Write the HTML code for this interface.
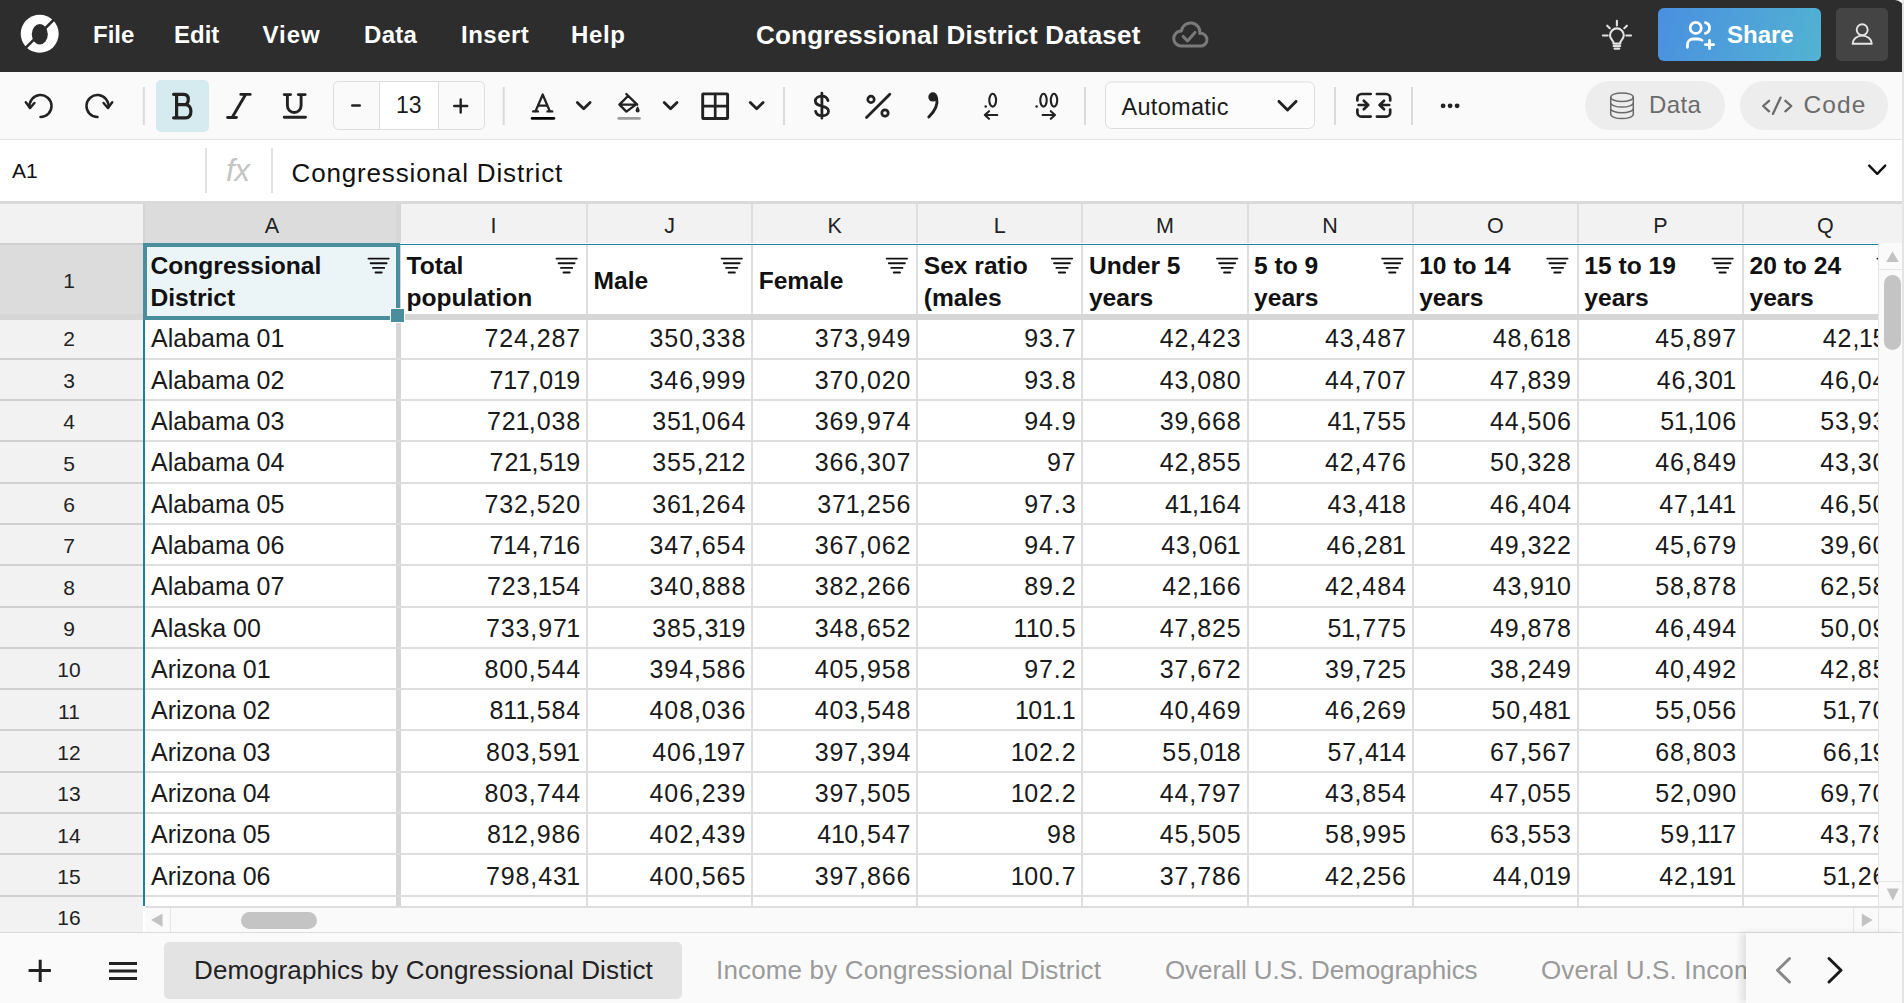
<!DOCTYPE html>
<html><head><meta charset="utf-8"><style>
*{box-sizing:border-box;margin:0;padding:0}
html,body{width:1904px;height:1003px;overflow:hidden;background:#fff}
body{position:relative;font-family:"Liberation Sans", sans-serif;color:#1a1a1a}
.a{position:absolute}
#top{left:0;top:0;width:1904px;height:72px;background:#2d2d2d;border-top-right-radius:9px}
.menu{color:#fff;font-weight:bold;font-size:24px;top:21px;line-height:28px}
#tb{left:0;top:72px;width:1902px;height:68px;background:#fafafa;border-bottom:1px solid #e2e2e2}
#fb{left:0;top:140px;width:1902px;height:61px;background:#fff}
.sep{width:2px;background:#dadada}
.ic{position:absolute}
.num{position:absolute;text-align:right;font-size:25px;letter-spacing:0.9px;line-height:28px;white-space:nowrap;color:#1a1a1a}
.txt{position:absolute;font-size:25px;line-height:28px;white-space:nowrap;color:#1a1a1a}
.tab{position:absolute;top:955px;font-size:26px;letter-spacing:0.14px;line-height:30px;white-space:nowrap}
.o{letter-spacing:-0.5px;margin-left:-1.2px}
.ot{margin-left:-1.5px}
.o2{letter-spacing:-2px}
.hd{position:absolute;font-size:24.6px;font-weight:bold;line-height:32px;white-space:nowrap;color:#111}
.rn{position:absolute;left:0;width:138px;text-align:center;font-size:21px;line-height:24px;color:#222}
.cl{position:absolute;text-align:center;font-size:21.5px;line-height:24px;color:#222}
</style></head>
<body>
<div class="a" id="top"></div>
<div class="a menu" style="left:93px;letter-spacing:0px">File</div>
<div class="a menu" style="left:174px;letter-spacing:0px">Edit</div>
<div class="a menu" style="left:262.5px;letter-spacing:1.0px">View</div>
<div class="a menu" style="left:364px;letter-spacing:0.3px">Data</div>
<div class="a menu" style="left:461px;letter-spacing:0.5px">Insert</div>
<div class="a menu" style="left:571px;letter-spacing:0.6px">Help</div>
<div class="a menu" style="left:756px;font-size:26px;letter-spacing:0.2px;top:20.5px">Congressional District Dataset</div>
<div class="a" id="tb"></div>
<div class="a" style="left:1658px;top:8px;width:163px;height:53px;border-radius:6px;background:linear-gradient(110deg,#4a8fe0 0%,#52b3d2 100%)"></div>
<div class="a" style="left:1836px;top:8px;width:52px;height:53px;border-radius:5px;background:#444"></div>
<div class="a menu" style="left:1727px;top:21px">Share</div>
<div class="a" style="left:0;top:72px;width:1904px;height:68px"></div>
<div class="a" id="fb"></div>
<svg class="a" style="left:0;top:0" width="1904" height="140" viewBox="0 0 1904 140"><circle cx="39.7" cy="33.8" r="19" fill="#fff"/><ellipse cx="39.8" cy="34.2" rx="8" ry="10.3" fill="#2d2d2d"/><line x1="56" y1="17.5" x2="23.4" y2="50.1" stroke="#2d2d2d" stroke-width="2.6"/><path d="M1181 45.9 A7.45 7.45 0 1 1 1181.35 31 A9.3 9.3 0 0 1 1199.8 33.4 A6.25 6.25 0 0 1 1201.5 45.9 Z" fill="none" stroke="#7a7a7a" stroke-width="3" stroke-linecap="round" stroke-linejoin="round"/><path d="M1183.2 36.4 L1187.5 41 L1195 32.4" fill="none" stroke="#7a7a7a" stroke-width="3" stroke-linecap="round" stroke-linejoin="round"/><path d="M1602.9 35.5h4.8 M1626.3 35.5h4.8 M1616.9 20.7v4.8 M1607.2 25.7l2.6 2.5 M1626.9 25.7l-2.6 2.5" fill="none" stroke="#e2e2e2" stroke-width="2.1" stroke-linecap="round" stroke-linejoin="round"/><path d="M1613.4 43.6 V42 C1613 40.5 1610 39 1610 35.3 A6.9 6.9 0 0 1 1623.8 35.3 C1623.8 39 1620.8 40.5 1620.4 42 V43.6 Z" fill="none" stroke="#e2e2e2" stroke-width="2.1" stroke-linecap="round" stroke-linejoin="round"/><path d="M1613.6 46h6.6 M1614.5 48.6h4.8" fill="none" stroke="#e2e2e2" stroke-width="2.1" stroke-linecap="round" stroke-linejoin="round"/><g transform="translate(1683.3 18.3) scale(1.38)" fill="none" stroke="#fff" stroke-width="2" stroke-linecap="round" stroke-linejoin="round"><path d="M5 7a4 4 0 1 0 8 0a4 4 0 0 0 -8 0"/><path d="M3 21v-2a4 4 0 0 1 4 -4h4c.96 0 1.84 .338 2.53 .901"/><path d="M16 3.13a4 4 0 0 1 0 7.75"/><path d="M16 19h6"/><path d="M19 16v6"/></g><circle cx="1862.2" cy="29.8" r="5.5" fill="none" stroke="#e6e6e6" stroke-width="1.9" stroke-linecap="round" stroke-linejoin="round"/><path d="M1852.6 43.8 A9.6 8.2 0 0 1 1871.8 43.8 Z" fill="none" stroke="#e6e6e6" stroke-width="1.9" stroke-linecap="round" stroke-linejoin="round"/><path d="M40.5 117 A11 11 0 1 0 29.65 107.6" fill="none" stroke="#222" stroke-width="2.5" stroke-linecap="round" stroke-linejoin="round"/><path d="M25.8 102.2 L30.1 108 L34.4 103" fill="none" stroke="#222" stroke-width="2.5" stroke-linecap="round" stroke-linejoin="round"/><path d="M97.5 117 A11 11 0 1 1 108.35 107.6" fill="none" stroke="#222" stroke-width="2.5" stroke-linecap="round" stroke-linejoin="round"/><path d="M112.2 102.2 L107.9 108 L103.6 103" fill="none" stroke="#222" stroke-width="2.5" stroke-linecap="round" stroke-linejoin="round"/><line x1="143.8" y1="87" x2="143.8" y2="125" stroke="#dadada" stroke-width="2"/><line x1="503.7" y1="87" x2="503.7" y2="125" stroke="#dadada" stroke-width="2"/><line x1="784" y1="87" x2="784" y2="125" stroke="#dadada" stroke-width="2"/><line x1="1085" y1="87" x2="1085" y2="125" stroke="#dadada" stroke-width="2"/><line x1="1335" y1="87" x2="1335" y2="125" stroke="#dadada" stroke-width="2"/><line x1="1412" y1="87" x2="1412" y2="125" stroke="#dadada" stroke-width="2"/><rect x="156" y="80" width="53" height="52" rx="5" fill="#d5ebf0"/><path d="M173.6 94.3 H183.8 C187 94.3 188.3 96.7 188.3 99.4 C188.3 102.1 187 104.6 183.8 104.6 H176.6 M176.6 94.3 V117.8 M173.6 117.8 H185.5 C189.6 117.8 190.9 115 190.9 111.2 C190.9 107.5 189 104.6 185 104.6" fill="none" stroke="#222" stroke-width="3.2" stroke-linecap="round" stroke-linejoin="round"/><path d="M240.8 94.4 H250.2 M227.6 117.5 H236.4 M245.6 94.4 L232.1 117.5" fill="none" stroke="#222" stroke-width="2.9" stroke-linecap="round" stroke-linejoin="round"/><path d="M284.2 94.6 H290.6 M298.3 94.6 H305.2 M287.4 94.6 V105.6 A6.85 6.85 0 0 0 301.1 105.6 V94.6 M284.2 117.3 H305.5" fill="none" stroke="#222" stroke-width="2.9" stroke-linecap="round" stroke-linejoin="round"/><rect x="333.5" y="81.5" width="151" height="48" rx="5" fill="#fafafa" stroke="#dddddd" stroke-width="1"/><rect x="379.5" y="82" width="59" height="47" fill="#fff"/><line x1="379.5" y1="82" x2="379.5" y2="129" stroke="#dddddd" stroke-width="1"/><line x1="438.5" y1="82" x2="438.5" y2="129" stroke="#dddddd" stroke-width="1"/><path d="M352.2 105.5 H359.8" fill="none" stroke="#222" stroke-width="2.4" stroke-linecap="round" stroke-linejoin="round"/><path d="M454.2 106 H467.2 M460.7 99.5 V112.5" fill="none" stroke="#222" stroke-width="2.4" stroke-linecap="round" stroke-linejoin="round"/><path d="M535.5 111.4 L542.7 94.6 L549.9 111.4 M538.6 105.6 H546.8 M533.2 111.4 H537.9 M547.5 111.4 H552.2" fill="none" stroke="#222" stroke-width="2.4" stroke-linecap="round" stroke-linejoin="round"/><line x1="532.2" y1="118.4" x2="553.8" y2="118.4" stroke="#000" stroke-width="2.9" stroke-linecap="round"/><path d="M577.3000000000001 102.4 L583.7 108.8 L590.1 102.4" fill="none" stroke="#222" stroke-width="2.8" stroke-linecap="round" stroke-linejoin="round"/><path d="M664.2 102.4 L670.6 108.8 L677.0 102.4" fill="none" stroke="#222" stroke-width="2.8" stroke-linecap="round" stroke-linejoin="round"/><path d="M750.3000000000001 102.4 L756.7 108.8 L763.1 102.4" fill="none" stroke="#222" stroke-width="2.8" stroke-linecap="round" stroke-linejoin="round"/><path d="M626.3 94 L637.2 104.6 H619.4 M619.4 104.6 L628 96 M619.4 104.6 L626.4 111.6 L635.8 104.6" fill="none" stroke="#222" stroke-width="2.4" stroke-linecap="round" stroke-linejoin="round"/><path d="M637.6 106.3 C636.2 108.3 635.6 109.5 635.6 110.6 A2 2 0 0 0 639.6 110.6 C639.6 109.5 639 108.3 637.6 106.3Z" fill="#222"/><line x1="618.9" y1="118.4" x2="639.4" y2="118.4" stroke="#9c9c9c" stroke-width="2.9" stroke-linecap="round"/><rect x="702.7" y="93.9" width="24.9" height="24.6" rx="0.6" fill="none" stroke="#222" stroke-width="2.9"/><path d="M715.2 93.9 V118.5 M702.7 106.2 H727.6" fill="none" stroke="#222" stroke-width="2.7"/><path d="M828 100.6 C827.3 97.8 825 96.1 821.9 96.1 C818 96.1 815.3 98.2 815.3 101.1 C815.3 104.5 818.5 105.3 821.9 106.1 C825.5 106.9 828.5 107.9 828.5 111.2 C828.5 114 825.6 115.8 821.9 115.8 C818.5 115.8 816.2 114 815.6 111.3 M821.9 93.2 V118.2" fill="none" stroke="#222" stroke-width="2.8" stroke-linecap="round" stroke-linejoin="round"/><circle cx="871" cy="99.4" r="3.2" fill="none" stroke="#222" stroke-width="2.7" stroke-linecap="round" stroke-linejoin="round"/><circle cx="885" cy="113" r="3.2" fill="none" stroke="#222" stroke-width="2.7" stroke-linecap="round" stroke-linejoin="round"/><path d="M866.5 117.6 L889.8 94.3" fill="none" stroke="#222" stroke-width="2.8" stroke-linecap="round" stroke-linejoin="round"/><circle cx="932.9" cy="96.9" r="4.6" fill="#222"/><path d="M936.6 98 C938 104 935 111 928.8 117" fill="none" stroke="#222" stroke-width="2.9" stroke-linecap="round" stroke-linejoin="round"/><circle cx="985.7" cy="106.6" r="1.25" fill="#222"/><ellipse cx="992.7" cy="100.2" rx="3.4" ry="6.4" fill="none" stroke="#222" stroke-width="2.1" stroke-linecap="round" stroke-linejoin="round"/><path d="M997.3 115 H984.8 M989 111.2 L984.8 115 L989 118.8" fill="none" stroke="#222" stroke-width="2.1" stroke-linecap="round" stroke-linejoin="round"/><circle cx="1036.6" cy="106.6" r="1.25" fill="#222"/><ellipse cx="1043.5" cy="100.2" rx="3.2" ry="6.4" fill="none" stroke="#222" stroke-width="2.1" stroke-linecap="round" stroke-linejoin="round"/><ellipse cx="1054" cy="100.2" rx="3.2" ry="6.4" fill="none" stroke="#222" stroke-width="2.1" stroke-linecap="round" stroke-linejoin="round"/><path d="M1042.6 115 H1055 M1050.8 111.2 L1055 115 L1050.8 118.8" fill="none" stroke="#222" stroke-width="2.1" stroke-linecap="round" stroke-linejoin="round"/><rect x="1105.5" y="82" width="209" height="46.5" rx="6" fill="#fcfcfc" stroke="#dddddd" stroke-width="1"/><path d="M1279 101.4 L1287.5 110 L1296 101.4" fill="none" stroke="#222" stroke-width="2.9" stroke-linecap="round" stroke-linejoin="round"/><path d="M1370.7 94 H1361.6 A4.2 4.2 0 0 0 1357.4 98.2 V100.4 M1357.4 109.6 V112.4 A4.2 4.2 0 0 0 1361.6 116.6 H1370.7 M1376.9 94 H1386 A4.2 4.2 0 0 1 1390.2 98.2 V100.4 M1390.2 109.6 V112.4 A4.2 4.2 0 0 1 1386 116.6 H1376.9" fill="none" stroke="#222" stroke-width="2.7" stroke-linecap="round" stroke-linejoin="round"/><path d="M1358.6 105 H1368.2 M1363.8 100.8 L1368.2 105 L1363.8 109.2 M1389.2 105 H1379.6 M1384 100.8 L1379.6 105 L1384 109.2" fill="none" stroke="#222" stroke-width="2.7" stroke-linecap="round" stroke-linejoin="round"/><circle cx="1443.1" cy="105.8" r="2.4" fill="#222"/><circle cx="1450.1" cy="105.8" r="2.4" fill="#222"/><circle cx="1457.1" cy="105.8" r="2.4" fill="#222"/><rect x="1585" y="81" width="140" height="49" rx="24.5" fill="#ededed"/><rect x="1740" y="81" width="148" height="49" rx="24.5" fill="#ededed"/><ellipse cx="1622" cy="97.2" rx="11.3" ry="4.3" fill="none" stroke="#6a6a6a" stroke-width="1.5" stroke-linecap="round" stroke-linejoin="round"/><path d="M1610.7 97.2 V114.3 A11.3 4.3 0 0 0 1633.3 114.3 V97.2 M1610.7 102.8 A11.3 4.3 0 0 0 1633.3 102.8 M1610.7 108.4 A11.3 4.3 0 0 0 1633.3 108.4" fill="none" stroke="#6a6a6a" stroke-width="1.5" stroke-linecap="round" stroke-linejoin="round"/><path d="M1769 100.8 L1763.2 106 L1769 111.3 M1785.4 100.8 L1791.3 106 L1785.4 111.3 M1780.6 97.6 L1772.9 113.9" fill="none" stroke="#6a6a6a" stroke-width="2.3" stroke-linecap="round" stroke-linejoin="round"/></svg>
<div class="a" style="left:12px;top:157px;font-size:21px;line-height:28px;color:#111">A1</div>
<div class="a sep" style="left:205px;top:148px;height:45px;width:2px;background:#e2e2e2"></div>
<div class="a" style="left:226px;top:154px;font-size:31px;font-style:italic;line-height:34px;color:#c4c4c4">fx</div>
<div class="a sep" style="left:271px;top:148px;height:45px;width:2px;background:#e2e2e2"></div>
<div class="a" style="left:291.5px;top:158.5px;font-size:26px;letter-spacing:0.85px;line-height:28px;color:#111">Congressional District</div>
<div class="a" style="left:0;top:201px;width:1904px;height:3px;background:#dadada"></div>
<div class="a" style="left:0;top:204px;width:1904px;height:39px;background:#f2f2f2"></div>
<div class="a" style="left:145px;top:204px;width:251px;height:39px;background:#dcdcdc"></div>
<div class="a" style="left:0;top:243px;width:143px;height:689px;background:#f2f2f2"></div>
<div class="a" style="left:0;top:243px;width:143px;height:77px;background:#dcdcdc"></div>
<div class="a" style="left:145px;top:245px;width:1733px;height:661px;background:#fff"></div>
<div class="a" style="left:143px;top:204px;width:2px;height:39px;background:#d4d4d4"></div>
<div class="a" style="left:396px;top:204px;width:5px;height:39px;background:#d6d6d6"></div>
<div class="a" style="left:586.00px;top:204px;width:2px;height:39px;background:#dedede"></div>
<div class="a" style="left:751.14px;top:204px;width:2px;height:39px;background:#dedede"></div>
<div class="a" style="left:916.28px;top:204px;width:2px;height:39px;background:#dedede"></div>
<div class="a" style="left:1081.42px;top:204px;width:2px;height:39px;background:#dedede"></div>
<div class="a" style="left:1246.56px;top:204px;width:2px;height:39px;background:#dedede"></div>
<div class="a" style="left:1411.70px;top:204px;width:2px;height:39px;background:#dedede"></div>
<div class="a" style="left:1576.84px;top:204px;width:2px;height:39px;background:#dedede"></div>
<div class="a" style="left:1741.98px;top:204px;width:2px;height:39px;background:#dedede"></div>
<div class="cl" style="left:145.00px;width:254.00px;top:213.5px">A</div>
<div class="cl" style="left:401.00px;width:185.00px;top:213.5px">I</div>
<div class="cl" style="left:588.00px;width:163.14px;top:213.5px">J</div>
<div class="cl" style="left:753.14px;width:163.14px;top:213.5px">K</div>
<div class="cl" style="left:918.28px;width:163.14px;top:213.5px">L</div>
<div class="cl" style="left:1083.42px;width:163.14px;top:213.5px">M</div>
<div class="cl" style="left:1248.56px;width:163.14px;top:213.5px">N</div>
<div class="cl" style="left:1413.70px;width:163.14px;top:213.5px">O</div>
<div class="cl" style="left:1578.84px;width:163.14px;top:213.5px">P</div>
<div class="cl" style="left:1743.98px;width:163.02px;top:213.5px">Q</div>
<div class="a" style="left:586.00px;top:245px;width:2px;height:661px;background:#dedede"></div>
<div class="a" style="left:751.14px;top:245px;width:2px;height:661px;background:#dedede"></div>
<div class="a" style="left:916.28px;top:245px;width:2px;height:661px;background:#dedede"></div>
<div class="a" style="left:1081.42px;top:245px;width:2px;height:661px;background:#dedede"></div>
<div class="a" style="left:1246.56px;top:245px;width:2px;height:661px;background:#dedede"></div>
<div class="a" style="left:1411.70px;top:245px;width:2px;height:661px;background:#dedede"></div>
<div class="a" style="left:1576.84px;top:245px;width:2px;height:661px;background:#dedede"></div>
<div class="a" style="left:1741.98px;top:245px;width:2px;height:661px;background:#dedede"></div>
<div class="a" style="left:396px;top:245px;width:5px;height:661px;background:#d6d6d6"></div>
<div class="a" style="left:145px;top:357.60px;width:1733px;height:2px;background:#dedede"></div>
<div class="a" style="left:0;top:357.60px;width:143px;height:2px;background:#d0d0d0"></div>
<div class="a" style="left:145px;top:398.92px;width:1733px;height:2px;background:#dedede"></div>
<div class="a" style="left:0;top:398.92px;width:143px;height:2px;background:#d0d0d0"></div>
<div class="a" style="left:145px;top:440.24px;width:1733px;height:2px;background:#dedede"></div>
<div class="a" style="left:0;top:440.24px;width:143px;height:2px;background:#d0d0d0"></div>
<div class="a" style="left:145px;top:481.56px;width:1733px;height:2px;background:#dedede"></div>
<div class="a" style="left:0;top:481.56px;width:143px;height:2px;background:#d0d0d0"></div>
<div class="a" style="left:145px;top:522.88px;width:1733px;height:2px;background:#dedede"></div>
<div class="a" style="left:0;top:522.88px;width:143px;height:2px;background:#d0d0d0"></div>
<div class="a" style="left:145px;top:564.20px;width:1733px;height:2px;background:#dedede"></div>
<div class="a" style="left:0;top:564.20px;width:143px;height:2px;background:#d0d0d0"></div>
<div class="a" style="left:145px;top:605.52px;width:1733px;height:2px;background:#dedede"></div>
<div class="a" style="left:0;top:605.52px;width:143px;height:2px;background:#d0d0d0"></div>
<div class="a" style="left:145px;top:646.84px;width:1733px;height:2px;background:#dedede"></div>
<div class="a" style="left:0;top:646.84px;width:143px;height:2px;background:#d0d0d0"></div>
<div class="a" style="left:145px;top:688.16px;width:1733px;height:2px;background:#dedede"></div>
<div class="a" style="left:0;top:688.16px;width:143px;height:2px;background:#d0d0d0"></div>
<div class="a" style="left:145px;top:729.48px;width:1733px;height:2px;background:#dedede"></div>
<div class="a" style="left:0;top:729.48px;width:143px;height:2px;background:#d0d0d0"></div>
<div class="a" style="left:145px;top:770.80px;width:1733px;height:2px;background:#dedede"></div>
<div class="a" style="left:0;top:770.80px;width:143px;height:2px;background:#d0d0d0"></div>
<div class="a" style="left:145px;top:812.12px;width:1733px;height:2px;background:#dedede"></div>
<div class="a" style="left:0;top:812.12px;width:143px;height:2px;background:#d0d0d0"></div>
<div class="a" style="left:145px;top:853.44px;width:1733px;height:2px;background:#dedede"></div>
<div class="a" style="left:0;top:853.44px;width:143px;height:2px;background:#d0d0d0"></div>
<div class="a" style="left:145px;top:894.76px;width:1733px;height:2px;background:#dedede"></div>
<div class="a" style="left:0;top:894.76px;width:143px;height:2px;background:#d0d0d0"></div>
<div class="a" style="left:0;top:243px;width:143px;height:2px;background:#cfcfcf"></div>
<div class="a" style="left:0;top:314px;width:1878px;height:6px;background:#d6d6d6"></div>
<div class="a" style="left:143px;top:243.6px;width:1735px;height:1.8px;background:#22839a"></div>
<div class="a" style="left:143.1px;top:243px;width:2px;height:663px;background:#1f8092"></div>
<div class="a" style="left:143px;top:243px;width:257px;height:76.5px;border:4px solid #4a8d9c;border-bottom-width:4.5px;background:#ebf5f8"></div>
<div class="a" style="left:390px;top:308px;width:15px;height:15px;background:#4a8d9c;border:1px solid #fff"></div>
<div class="rn" style="top:269.2px">1</div>
<div class="rn" style="top:327.00px">2</div>
<div class="rn" style="top:369.00px">3</div>
<div class="rn" style="top:410.33px">4</div>
<div class="rn" style="top:451.66px">5</div>
<div class="rn" style="top:492.99px">6</div>
<div class="rn" style="top:534.32px">7</div>
<div class="rn" style="top:575.65px">8</div>
<div class="rn" style="top:616.98px">9</div>
<div class="rn" style="top:658.31px">10</div>
<div class="rn" style="top:699.64px">11</div>
<div class="rn" style="top:740.97px">12</div>
<div class="rn" style="top:782.30px">13</div>
<div class="rn" style="top:823.63px">14</div>
<div class="rn" style="top:864.96px">15</div>
<div class="rn" style="top:906.29px">16</div>
<div class="hd" style="left:150.50px;top:250.00px">Congressional<br>District</div>
<div class="hd" style="left:406.50px;top:250.00px">Total<br>population</div>
<div class="hd" style="left:593.50px;top:265.00px">Male</div>
<div class="hd" style="left:758.64px;top:265.00px">Female</div>
<div class="hd" style="left:923.78px;top:250.00px">Sex ratio<br>(males</div>
<div class="hd" style="left:1088.92px;top:250.00px">Under 5<br>years</div>
<div class="hd" style="left:1254.06px;top:250.00px">5 to 9<br>years</div>
<div class="hd" style="left:1419.20px;top:250.00px">10 to 14<br>years</div>
<div class="hd" style="left:1584.34px;top:250.00px">15 to 19<br>years</div>
<div class="hd" style="left:1749.48px;top:250.00px">20 to 24<br>years</div>
<svg class="a" style="left:0;top:0" width="1904" height="320" viewBox="0 0 1904 320"><path d="M368.45 258.6H388.75M370.65 263.2H386.55M373.00 267.9H384.20M375.50 272.5H381.70M556.45 258.6H576.75M558.65 263.2H574.55M561.00 267.9H572.20M563.50 272.5H569.70M721.59 258.6H741.89M723.79 263.2H739.69M726.14 267.9H737.34M728.64 272.5H734.84M886.73 258.6H907.03M888.93 263.2H904.83M891.28 267.9H902.48M893.78 272.5H899.98M1051.87 258.6H1072.17M1054.07 263.2H1069.97M1056.42 267.9H1067.62M1058.92 272.5H1065.12M1217.01 258.6H1237.31M1219.21 263.2H1235.11M1221.56 267.9H1232.76M1224.06 272.5H1230.26M1382.15 258.6H1402.45M1384.35 263.2H1400.25M1386.70 267.9H1397.90M1389.20 272.5H1395.40M1547.29 258.6H1567.59M1549.49 263.2H1565.39M1551.84 267.9H1563.04M1554.34 272.5H1560.54M1712.43 258.6H1732.73M1714.63 263.2H1730.53M1716.98 267.9H1728.18M1719.48 272.5H1725.68M1877.45 258.6H1897.75M1879.65 263.2H1895.55M1882.00 267.9H1893.20M1884.50 272.5H1890.70" fill="none" stroke="#111" stroke-width="1.9" stroke-linecap="round"/></svg>
<div class="txt" style="left:151px;top:323.70px">Alabama 0<span class=o2>1</span></div>
<div class="num" style="left:401.00px;width:180.10px;top:323.70px">724,287</div>
<div class="num" style="left:588.00px;width:158.24px;top:323.70px">350,338</div>
<div class="num" style="left:753.14px;width:158.24px;top:323.70px">373,949</div>
<div class="num" style="left:918.28px;width:158.24px;top:323.70px">93.7</div>
<div class="num" style="left:1083.42px;width:158.24px;top:323.70px">42,423</div>
<div class="num" style="left:1248.56px;width:158.24px;top:323.70px">43,487</div>
<div class="num" style="left:1413.70px;width:158.24px;top:323.70px">48,6<span class=o>1</span>8</div>
<div class="num" style="left:1578.84px;width:158.24px;top:323.70px">45,897</div>
<div class="num" style="left:1743.98px;width:158.12px;top:323.70px">42,<span class=o>1</span>57</div>
<div class="txt" style="left:151px;top:365.70px">Alabama 02</div>
<div class="num" style="left:401.00px;width:180.10px;top:365.70px">7<span class=o>1</span>7,0<span class=o>1</span>9</div>
<div class="num" style="left:588.00px;width:158.24px;top:365.70px">346,999</div>
<div class="num" style="left:753.14px;width:158.24px;top:365.70px">370,020</div>
<div class="num" style="left:918.28px;width:158.24px;top:365.70px">93.8</div>
<div class="num" style="left:1083.42px;width:158.24px;top:365.70px">43,080</div>
<div class="num" style="left:1248.56px;width:158.24px;top:365.70px">44,707</div>
<div class="num" style="left:1413.70px;width:158.24px;top:365.70px">47,839</div>
<div class="num" style="left:1578.84px;width:158.24px;top:365.70px">46,30<span class=ot>1</span></div>
<div class="num" style="left:1743.98px;width:158.12px;top:365.70px">46,043</div>
<div class="txt" style="left:151px;top:407.03px">Alabama 03</div>
<div class="num" style="left:401.00px;width:180.10px;top:407.03px">72<span class=o>1</span>,038</div>
<div class="num" style="left:588.00px;width:158.24px;top:407.03px">35<span class=o>1</span>,064</div>
<div class="num" style="left:753.14px;width:158.24px;top:407.03px">369,974</div>
<div class="num" style="left:918.28px;width:158.24px;top:407.03px">94.9</div>
<div class="num" style="left:1083.42px;width:158.24px;top:407.03px">39,668</div>
<div class="num" style="left:1248.56px;width:158.24px;top:407.03px">4<span class=o>1</span>,755</div>
<div class="num" style="left:1413.70px;width:158.24px;top:407.03px">44,506</div>
<div class="num" style="left:1578.84px;width:158.24px;top:407.03px">5<span class=o>1</span>,<span class=o>1</span>06</div>
<div class="num" style="left:1743.98px;width:158.12px;top:407.03px">53,932</div>
<div class="txt" style="left:151px;top:448.36px">Alabama 04</div>
<div class="num" style="left:401.00px;width:180.10px;top:448.36px">72<span class=o>1</span>,5<span class=o>1</span>9</div>
<div class="num" style="left:588.00px;width:158.24px;top:448.36px">355,2<span class=o>1</span>2</div>
<div class="num" style="left:753.14px;width:158.24px;top:448.36px">366,307</div>
<div class="num" style="left:918.28px;width:158.24px;top:448.36px">97</div>
<div class="num" style="left:1083.42px;width:158.24px;top:448.36px">42,855</div>
<div class="num" style="left:1248.56px;width:158.24px;top:448.36px">42,476</div>
<div class="num" style="left:1413.70px;width:158.24px;top:448.36px">50,328</div>
<div class="num" style="left:1578.84px;width:158.24px;top:448.36px">46,849</div>
<div class="num" style="left:1743.98px;width:158.12px;top:448.36px">43,300</div>
<div class="txt" style="left:151px;top:489.69px">Alabama 05</div>
<div class="num" style="left:401.00px;width:180.10px;top:489.69px">732,520</div>
<div class="num" style="left:588.00px;width:158.24px;top:489.69px">36<span class=o>1</span>,264</div>
<div class="num" style="left:753.14px;width:158.24px;top:489.69px">37<span class=o>1</span>,256</div>
<div class="num" style="left:918.28px;width:158.24px;top:489.69px">97.3</div>
<div class="num" style="left:1083.42px;width:158.24px;top:489.69px">4<span class=o>1</span>,<span class=o>1</span>64</div>
<div class="num" style="left:1248.56px;width:158.24px;top:489.69px">43,4<span class=o>1</span>8</div>
<div class="num" style="left:1413.70px;width:158.24px;top:489.69px">46,404</div>
<div class="num" style="left:1578.84px;width:158.24px;top:489.69px">47,<span class=o>1</span>4<span class=ot>1</span></div>
<div class="num" style="left:1743.98px;width:158.12px;top:489.69px">46,500</div>
<div class="txt" style="left:151px;top:531.02px">Alabama 06</div>
<div class="num" style="left:401.00px;width:180.10px;top:531.02px">7<span class=o>1</span>4,7<span class=o>1</span>6</div>
<div class="num" style="left:588.00px;width:158.24px;top:531.02px">347,654</div>
<div class="num" style="left:753.14px;width:158.24px;top:531.02px">367,062</div>
<div class="num" style="left:918.28px;width:158.24px;top:531.02px">94.7</div>
<div class="num" style="left:1083.42px;width:158.24px;top:531.02px">43,06<span class=ot>1</span></div>
<div class="num" style="left:1248.56px;width:158.24px;top:531.02px">46,28<span class=ot>1</span></div>
<div class="num" style="left:1413.70px;width:158.24px;top:531.02px">49,322</div>
<div class="num" style="left:1578.84px;width:158.24px;top:531.02px">45,679</div>
<div class="num" style="left:1743.98px;width:158.12px;top:531.02px">39,600</div>
<div class="txt" style="left:151px;top:572.35px">Alabama 07</div>
<div class="num" style="left:401.00px;width:180.10px;top:572.35px">723,<span class=o>1</span>54</div>
<div class="num" style="left:588.00px;width:158.24px;top:572.35px">340,888</div>
<div class="num" style="left:753.14px;width:158.24px;top:572.35px">382,266</div>
<div class="num" style="left:918.28px;width:158.24px;top:572.35px">89.2</div>
<div class="num" style="left:1083.42px;width:158.24px;top:572.35px">42,<span class=o>1</span>66</div>
<div class="num" style="left:1248.56px;width:158.24px;top:572.35px">42,484</div>
<div class="num" style="left:1413.70px;width:158.24px;top:572.35px">43,9<span class=o>1</span>0</div>
<div class="num" style="left:1578.84px;width:158.24px;top:572.35px">58,878</div>
<div class="num" style="left:1743.98px;width:158.12px;top:572.35px">62,588</div>
<div class="txt" style="left:151px;top:613.68px">Alaska 00</div>
<div class="num" style="left:401.00px;width:180.10px;top:613.68px">733,97<span class=ot>1</span></div>
<div class="num" style="left:588.00px;width:158.24px;top:613.68px">385,3<span class=o>1</span>9</div>
<div class="num" style="left:753.14px;width:158.24px;top:613.68px">348,652</div>
<div class="num" style="left:918.28px;width:158.24px;top:613.68px"><span class=o>1</span><span class=o>1</span>0.5</div>
<div class="num" style="left:1083.42px;width:158.24px;top:613.68px">47,825</div>
<div class="num" style="left:1248.56px;width:158.24px;top:613.68px">5<span class=o>1</span>,775</div>
<div class="num" style="left:1413.70px;width:158.24px;top:613.68px">49,878</div>
<div class="num" style="left:1578.84px;width:158.24px;top:613.68px">46,494</div>
<div class="num" style="left:1743.98px;width:158.12px;top:613.68px">50,099</div>
<div class="txt" style="left:151px;top:655.01px">Arizona 0<span class=o2>1</span></div>
<div class="num" style="left:401.00px;width:180.10px;top:655.01px">800,544</div>
<div class="num" style="left:588.00px;width:158.24px;top:655.01px">394,586</div>
<div class="num" style="left:753.14px;width:158.24px;top:655.01px">405,958</div>
<div class="num" style="left:918.28px;width:158.24px;top:655.01px">97.2</div>
<div class="num" style="left:1083.42px;width:158.24px;top:655.01px">37,672</div>
<div class="num" style="left:1248.56px;width:158.24px;top:655.01px">39,725</div>
<div class="num" style="left:1413.70px;width:158.24px;top:655.01px">38,249</div>
<div class="num" style="left:1578.84px;width:158.24px;top:655.01px">40,492</div>
<div class="num" style="left:1743.98px;width:158.12px;top:655.01px">42,855</div>
<div class="txt" style="left:151px;top:696.34px">Arizona 02</div>
<div class="num" style="left:401.00px;width:180.10px;top:696.34px">8<span class=o>1</span><span class=o>1</span>,584</div>
<div class="num" style="left:588.00px;width:158.24px;top:696.34px">408,036</div>
<div class="num" style="left:753.14px;width:158.24px;top:696.34px">403,548</div>
<div class="num" style="left:918.28px;width:158.24px;top:696.34px"><span class=o>1</span>0<span class=o>1</span>.<span class=ot>1</span></div>
<div class="num" style="left:1083.42px;width:158.24px;top:696.34px">40,469</div>
<div class="num" style="left:1248.56px;width:158.24px;top:696.34px">46,269</div>
<div class="num" style="left:1413.70px;width:158.24px;top:696.34px">50,48<span class=ot>1</span></div>
<div class="num" style="left:1578.84px;width:158.24px;top:696.34px">55,056</div>
<div class="num" style="left:1743.98px;width:158.12px;top:696.34px">5<span class=o>1</span>,700</div>
<div class="txt" style="left:151px;top:737.67px">Arizona 03</div>
<div class="num" style="left:401.00px;width:180.10px;top:737.67px">803,59<span class=ot>1</span></div>
<div class="num" style="left:588.00px;width:158.24px;top:737.67px">406,<span class=o>1</span>97</div>
<div class="num" style="left:753.14px;width:158.24px;top:737.67px">397,394</div>
<div class="num" style="left:918.28px;width:158.24px;top:737.67px"><span class=o>1</span>02.2</div>
<div class="num" style="left:1083.42px;width:158.24px;top:737.67px">55,0<span class=o>1</span>8</div>
<div class="num" style="left:1248.56px;width:158.24px;top:737.67px">57,4<span class=o>1</span>4</div>
<div class="num" style="left:1413.70px;width:158.24px;top:737.67px">67,567</div>
<div class="num" style="left:1578.84px;width:158.24px;top:737.67px">68,803</div>
<div class="num" style="left:1743.98px;width:158.12px;top:737.67px">66,<span class=o>1</span>99</div>
<div class="txt" style="left:151px;top:779.00px">Arizona 04</div>
<div class="num" style="left:401.00px;width:180.10px;top:779.00px">803,744</div>
<div class="num" style="left:588.00px;width:158.24px;top:779.00px">406,239</div>
<div class="num" style="left:753.14px;width:158.24px;top:779.00px">397,505</div>
<div class="num" style="left:918.28px;width:158.24px;top:779.00px"><span class=o>1</span>02.2</div>
<div class="num" style="left:1083.42px;width:158.24px;top:779.00px">44,797</div>
<div class="num" style="left:1248.56px;width:158.24px;top:779.00px">43,854</div>
<div class="num" style="left:1413.70px;width:158.24px;top:779.00px">47,055</div>
<div class="num" style="left:1578.84px;width:158.24px;top:779.00px">52,090</div>
<div class="num" style="left:1743.98px;width:158.12px;top:779.00px">69,700</div>
<div class="txt" style="left:151px;top:820.33px">Arizona 05</div>
<div class="num" style="left:401.00px;width:180.10px;top:820.33px">8<span class=o>1</span>2,986</div>
<div class="num" style="left:588.00px;width:158.24px;top:820.33px">402,439</div>
<div class="num" style="left:753.14px;width:158.24px;top:820.33px">4<span class=o>1</span>0,547</div>
<div class="num" style="left:918.28px;width:158.24px;top:820.33px">98</div>
<div class="num" style="left:1083.42px;width:158.24px;top:820.33px">45,505</div>
<div class="num" style="left:1248.56px;width:158.24px;top:820.33px">58,995</div>
<div class="num" style="left:1413.70px;width:158.24px;top:820.33px">63,553</div>
<div class="num" style="left:1578.84px;width:158.24px;top:820.33px">59,<span class=o>1</span><span class=o>1</span>7</div>
<div class="num" style="left:1743.98px;width:158.12px;top:820.33px">43,788</div>
<div class="txt" style="left:151px;top:861.66px">Arizona 06</div>
<div class="num" style="left:401.00px;width:180.10px;top:861.66px">798,43<span class=ot>1</span></div>
<div class="num" style="left:588.00px;width:158.24px;top:861.66px">400,565</div>
<div class="num" style="left:753.14px;width:158.24px;top:861.66px">397,866</div>
<div class="num" style="left:918.28px;width:158.24px;top:861.66px"><span class=o>1</span>00.7</div>
<div class="num" style="left:1083.42px;width:158.24px;top:861.66px">37,786</div>
<div class="num" style="left:1248.56px;width:158.24px;top:861.66px">42,256</div>
<div class="num" style="left:1413.70px;width:158.24px;top:861.66px">44,0<span class=o>1</span>9</div>
<div class="num" style="left:1578.84px;width:158.24px;top:861.66px">42,<span class=o>1</span>9<span class=ot>1</span></div>
<div class="num" style="left:1743.98px;width:158.12px;top:861.66px">5<span class=o>1</span>,266</div>
<div class="a" style="left:1878px;top:243px;width:24px;height:664px;background:#fafafa;border-left:1px solid #e4e4e4"></div>
<div class="a" style="left:1879px;top:269px;width:23px;height:1px;background:#e6e6e6"></div>
<div class="a" style="left:1879px;top:881px;width:23px;height:1px;background:#e6e6e6"></div>
<div class="a" style="left:1884px;top:275px;width:17px;height:75px;border-radius:8.5px;background:#c4c4c4"></div>
<div class="a" style="left:145px;top:906px;width:1757px;height:26px;background:#fafafa;border-top:2px solid #dedede"></div>
<div class="a" style="left:170px;top:908px;width:1px;height:24px;background:#e4e4e4"></div>
<div class="a" style="left:1853px;top:908px;width:1px;height:24px;background:#e4e4e4"></div>
<div class="a" style="left:1878px;top:906px;width:1px;height:26px;background:#e4e4e4"></div>
<div class="a" style="left:241px;top:912px;width:76px;height:17px;border-radius:8.5px;background:#c4c4c4"></div>
<svg class="a" style="left:0;top:0" width="1904" height="1003" viewBox="0 0 1904 1003"><g fill="#c2c2c2"><path d="M1886.3 262 L1892.5 251.4 L1898.8 262Z"/><path d="M1886.7 888.5 L1892.8 900.6 L1898.9 888.5Z"/><path d="M162.5 913.4 L151 920.1 L162.5 926.8Z"/><path d="M1861.8 913.4 L1872.6 920.1 L1861.8 926.8Z"/></g></svg>
<div class="a" style="left:0;top:932px;width:1904px;height:71px;background:#fafafa;border-top:1px solid #dcdcdc"></div>
<div class="a" style="left:164px;top:942px;width:518px;height:57px;background:#e3e3e3;border-radius:5px"></div>
<div class="a tab" style="left:194px;color:#222">Demographics by Congressional Distict</div>
<div class="a tab" style="left:716px;color:#9a9a9a;letter-spacing:0.16px">Income by Congressional District</div>
<div class="a tab" style="left:1165px;color:#9a9a9a;letter-spacing:-0.1px">Overall U.S. Demographics</div>
<div class="a tab" style="left:1541px;color:#9a9a9a">Overal U.S. Income by Congressional District</div>
<div class="a" style="left:1746px;top:933px;width:156px;height:70px;background:#fafafa;box-shadow:-5px 0 7px rgba(0,0,0,0.10)"></div>
<svg class="a" style="left:0;top:0" width="1904" height="1003" viewBox="0 0 1904 1003"><path d="M40.2 959.8V982.1 M28.6 970.6H50.9 M109 963.4H137 M109 971H137 M109 978.6H137" fill="none" stroke="#222" stroke-width="3"/><path d="M1789.5 958.5 L1777.5 970.3 L1789.5 982" fill="none" stroke="#888" stroke-width="3" stroke-linecap="round" stroke-linejoin="round"/><path d="M1829 958.5 L1841 970.3 L1829 982" fill="none" stroke="#1a1a1a" stroke-width="3" stroke-linecap="round" stroke-linejoin="round"/></svg>
<div class="a" style="left:1902px;top:0;width:2px;height:1003px;background:#e4e4e4"></div>
<div class="a" style="left:1878px;top:72px;width:24px;height:0"></div>
<svg class="a" style="left:0;top:0" width="1904" height="200" viewBox="0 0 1904 200"><path d="M1869.2 165.6 L1877.2 173.8 L1885.2 165.6" fill="none" stroke="#111" stroke-width="2.4" stroke-linecap="round" stroke-linejoin="round"/></svg>
<div class="a" style="left:396px;top:91px;font-size:23px;line-height:28px;color:#1a1a1a">13</div>
<div class="a" style="left:1121.5px;top:92.5px;font-size:23.5px;letter-spacing:0.3px;line-height:28px;color:#1a1a1a">Automatic</div>
<div class="a" style="left:1649px;top:91px;font-size:24px;letter-spacing:0.4px;line-height:28px;color:#6b6b6b">Data</div>
<div class="a" style="left:1803.5px;top:91px;font-size:24.5px;letter-spacing:1.1px;line-height:28px;color:#6b6b6b">Code</div>
</body></html>
